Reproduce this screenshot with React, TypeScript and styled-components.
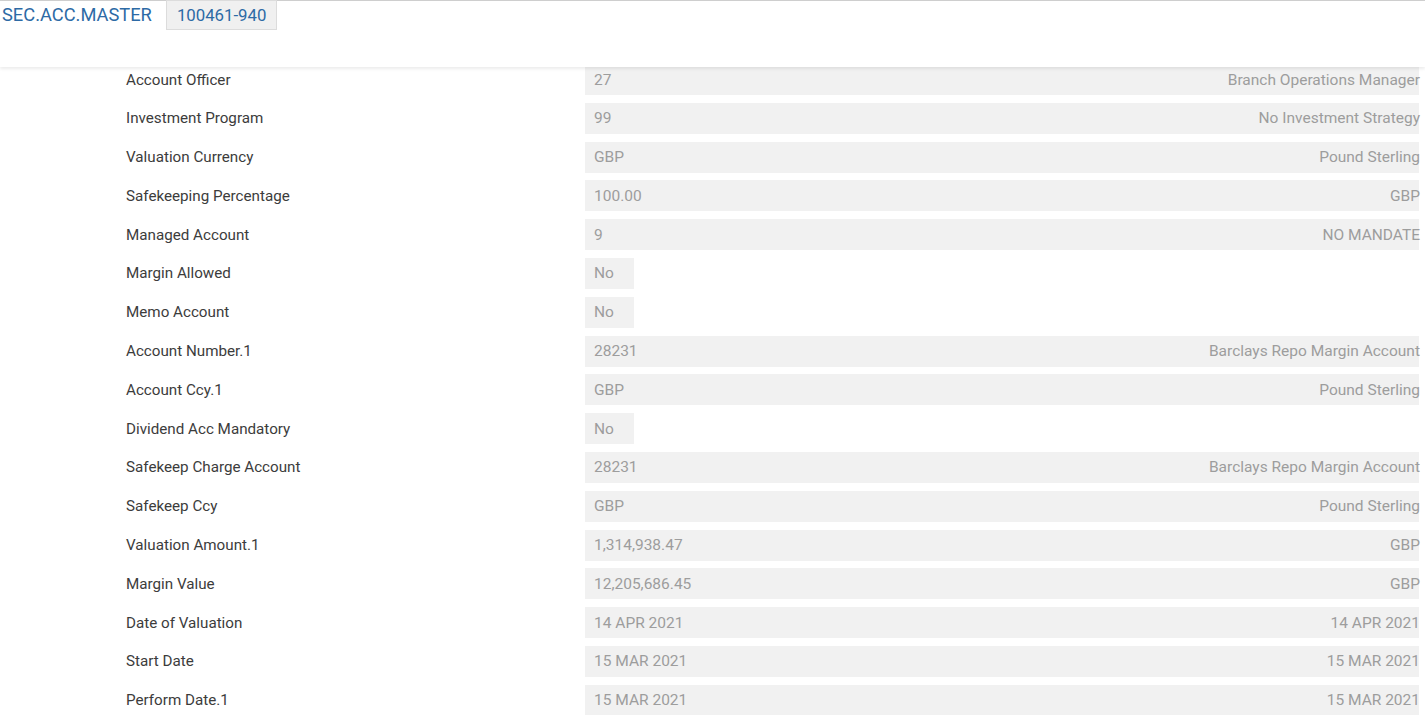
import React from "react";
import styled, { createGlobalStyle } from "styled-components";

const Global = createGlobalStyle`
  html, body { margin: 0; padding: 0; background: #fff; }
  body { font-family: Roboto, "Liberation Sans", sans-serif; }
`;

const Page = styled.div`
  width: 1425px;
  border-top: 1px solid #cfcfcf;
  box-sizing: border-box;
`;

const Header = styled.header`
  position: relative;
  z-index: 2;
  height: 66px;
  background: #fff;
  box-shadow: 0 2px 3px rgba(0, 0, 0, 0.08);
  display: flex;
  align-items: flex-start;
  gap: 14px;
  padding-left: 2px;
`;

const Title = styled.div`
  color: #2d6aa5;
  font-size: 18.3px;
  line-height: 28px;
`;

const Tab = styled.div`
  margin-top: -1px;
  height: 30px;
  box-sizing: border-box;
  padding: 0 10px;
  background: #f0f0f0;
  border: 1px solid #dcdcdc;
  color: #2d6aa5;
  font-size: 16.8px;
  line-height: 28px;
`;

const Content = styled.div`
  position: relative;
  z-index: 1;
  margin-top: -3px;
  display: flex;
  flex-direction: column;
  gap: 7.8px;
`;

const Row = styled.div`
  display: grid;
  grid-template-columns: 459px 834px;
  padding-left: 126px;
  align-items: center;
  height: 31px;
`;

const Label = styled.div`
  color: #3c3c3c;
  font-size: 15.2px;
`;

const Value = styled.div<{ $short?: boolean }>`
  height: 31px;
  box-sizing: border-box;
  width: ${(p) => (p.$short ? "49px" : "834px")};
  background: #f1f1f1;
  color: #9d9d9d;
  font-size: 15.5px;
  display: flex;
  align-items: center;
  justify-content: space-between;
  padding-left: 9px;
  padding-right: 0;
  white-space: nowrap;
`;

const Right = styled.span`
  margin-right: -1px;
`;

type R = { label: string; code: string; desc?: string; short?: boolean };

const rows: R[] = [
  { label: "Account Officer", code: "27", desc: "Branch Operations Manager" },
  { label: "Investment Program", code: "99", desc: "No Investment Strategy" },
  { label: "Valuation Currency", code: "GBP", desc: "Pound Sterling" },
  { label: "Safekeeping Percentage", code: "100.00", desc: "GBP" },
  { label: "Managed Account", code: "9", desc: "NO MANDATE" },
  { label: "Margin Allowed", code: "No", short: true },
  { label: "Memo Account", code: "No", short: true },
  { label: "Account Number.1", code: "28231", desc: "Barclays Repo Margin Account" },
  { label: "Account Ccy.1", code: "GBP", desc: "Pound Sterling" },
  { label: "Dividend Acc Mandatory", code: "No", short: true },
  { label: "Safekeep Charge Account", code: "28231", desc: "Barclays Repo Margin Account" },
  { label: "Safekeep Ccy", code: "GBP", desc: "Pound Sterling" },
  { label: "Valuation Amount.1", code: "1,314,938.47", desc: "GBP" },
  { label: "Margin Value", code: "12,205,686.45", desc: "GBP" },
  { label: "Date of Valuation", code: "14 APR 2021", desc: "14 APR 2021" },
  { label: "Start Date", code: "15 MAR 2021", desc: "15 MAR 2021" },
  { label: "Perform Date.1", code: "15 MAR 2021", desc: "15 MAR 2021" },
];

export default function App() {
  return (
    <Page>
      <Global />
      <Header>
        <Title>SEC.ACC.MASTER</Title>
        <Tab>100461-940</Tab>
      </Header>
      <Content>
        {rows.map((r) => (
          <Row key={r.label}>
            <Label>{r.label}</Label>
            <Value $short={r.short}>
              <span>{r.code}</span>
              {r.desc && <Right>{r.desc}</Right>}
            </Value>
          </Row>
        ))}
      </Content>
    </Page>
  );
}
